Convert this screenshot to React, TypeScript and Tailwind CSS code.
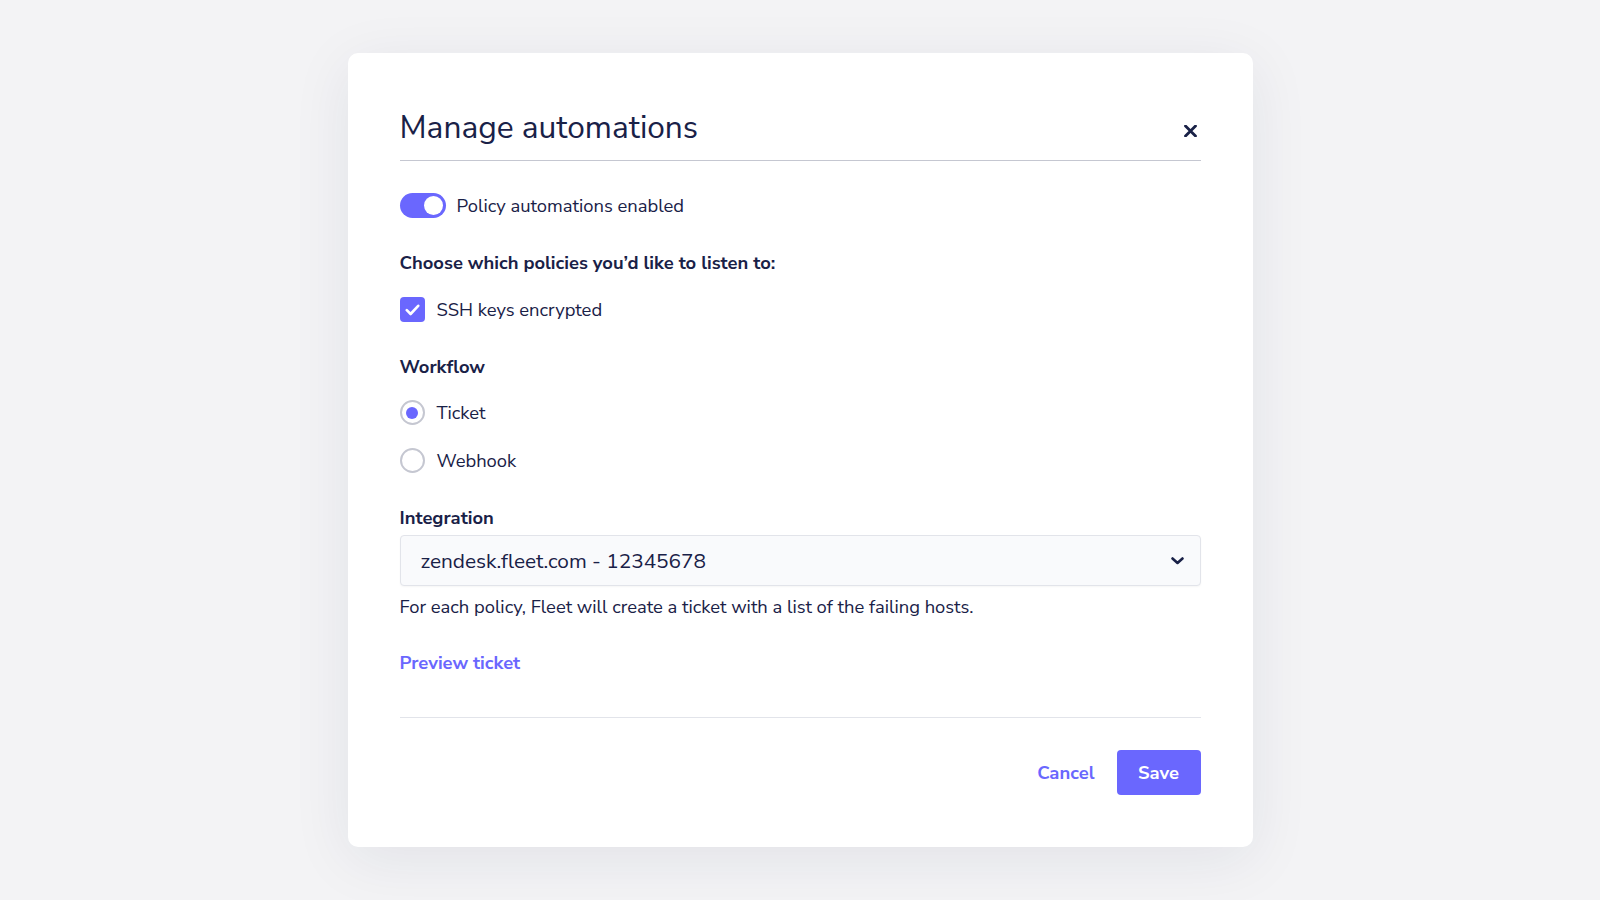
import React, { useState } from "react";

const font = { fontFamily: '"Nunito Sans", Lato, "Open Sans", sans-serif' };

const Toggle = ({ on }: { on: boolean }) => (
  <span className={`flex h-[25px] w-[46px] items-center rounded-full px-[3px] ${on ? "justify-end bg-[#6a67fe]" : "justify-start bg-[#c5c7d1]"}`}>
    <span className="h-[19px] w-[19px] rounded-full bg-white" />
  </span>
);

const Radio = ({ checked, label, onClick }: { checked: boolean; label: string; onClick: () => void }) => (
  <button onClick={onClick} className="flex items-center gap-[12px] text-left">
    <span className="flex h-[25px] w-[25px] items-center justify-center rounded-full border-[2.5px] border-[#c5c7d1] bg-white">
      {checked && <span className="h-[12px] w-[12px] rounded-full bg-[#6a67fe]" />}
    </span>
    <span className="text-[18.4px] leading-[24px]">{label}</span>
  </button>
);

export default function App() {
  const [workflow, setWorkflow] = useState("ticket");

  return (
    <div style={font} className="flex min-h-[900px] w-full items-start justify-center bg-[#f3f3f5] pt-[53px] text-[#192147]">
      <div className="w-[905px] rounded-[10px] bg-white px-[52px] pb-[52px] pt-[55px] shadow-[0_12px_60px_rgba(25,33,71,0.08)]">
        {/* header */}
        <div className="flex items-center justify-between border-b border-[#c5c7d1] pb-[12px]">
          <h1 className="text-[31.7px] font-normal leading-[40px]">Manage automations</h1>
          <button className="mr-[4px] mt-[6px]">
            <svg width="13" height="12" viewBox="0 0 13 12" fill="none">
              <path d="M1.5 1L11.5 11M11.5 1L1.5 11" stroke="#192147" strokeWidth="2.8" strokeLinecap="round" />
            </svg>
          </button>
        </div>

        <div className="mt-[32px] flex items-center gap-[11px]">
          <Toggle on />
          <span className="text-[18.4px] leading-[24px]">Policy automations enabled</span>
        </div>

        <p className="mt-[33px] text-[18.4px] font-bold leading-[24px]">Choose which policies you’d like to listen to:</p>

        <label className="mt-[22px] flex items-center gap-[12px]">
          <span className="flex h-[25px] w-[25px] items-center justify-center rounded-[4px] bg-[#6a67fe]">
            <svg width="15" height="12" viewBox="0 0 15 12" fill="none">
              <path d="M1.8 6.2L5.6 10L13.2 1.8" stroke="white" strokeWidth="2.6" strokeLinecap="round" strokeLinejoin="round" />
            </svg>
          </span>
          <span className="text-[18.4px] leading-[24px]">SSH keys encrypted</span>
        </label>

        <p className="mt-[33px] text-[18.4px] font-bold leading-[24px]">Workflow</p>
        <div className="mt-[21px] flex flex-col items-start gap-[23px]">
          <Radio checked={workflow === "ticket"} label="Ticket" onClick={() => setWorkflow("ticket")} />
          <Radio checked={workflow === "webhook"} label="Webhook" onClick={() => setWorkflow("webhook")} />
        </div>

        <p className="mt-[33px] text-[18.4px] font-bold leading-[24px]">Integration</p>
        <div className="mt-[5px] flex h-[51px] items-center justify-between rounded-[4px] border border-[#e2e4ea] bg-[#f9fafc] pl-[20px] pr-[16px] shadow-[0_1px_2px_rgba(0,0,0,0.04)]">
          <span className="text-[20.8px] leading-[24px]">zendesk.fleet.com - 12345678</span>
          <svg width="13" height="8" viewBox="0 0 13 8" fill="none">
            <path d="M1.5 1.5L6.5 6L11.5 1.5" stroke="#192147" strokeWidth="2.6" strokeLinecap="round" strokeLinejoin="round" />
          </svg>
        </div>
        <p className="mt-[9px] text-[18.4px] leading-[24px]">For each policy, Fleet will create a ticket with a list of the failing hosts.</p>

        <button className="mt-[32px] text-[18.4px] font-bold leading-[24px] text-[#6a67fe]">Preview ticket</button>

        <div className="mt-[41px] border-t border-[#e2e4ea]" />

        <div className="mt-[32px] flex items-center justify-end gap-[22px]">
          <button className="text-[18.4px] font-bold text-[#6a67fe]">Cancel</button>
          <button className="h-[45px] w-[84px] rounded-[4px] bg-[#6a67fe] text-[18.4px] font-bold text-white">Save</button>
        </div>
      </div>
    </div>
  );
}
